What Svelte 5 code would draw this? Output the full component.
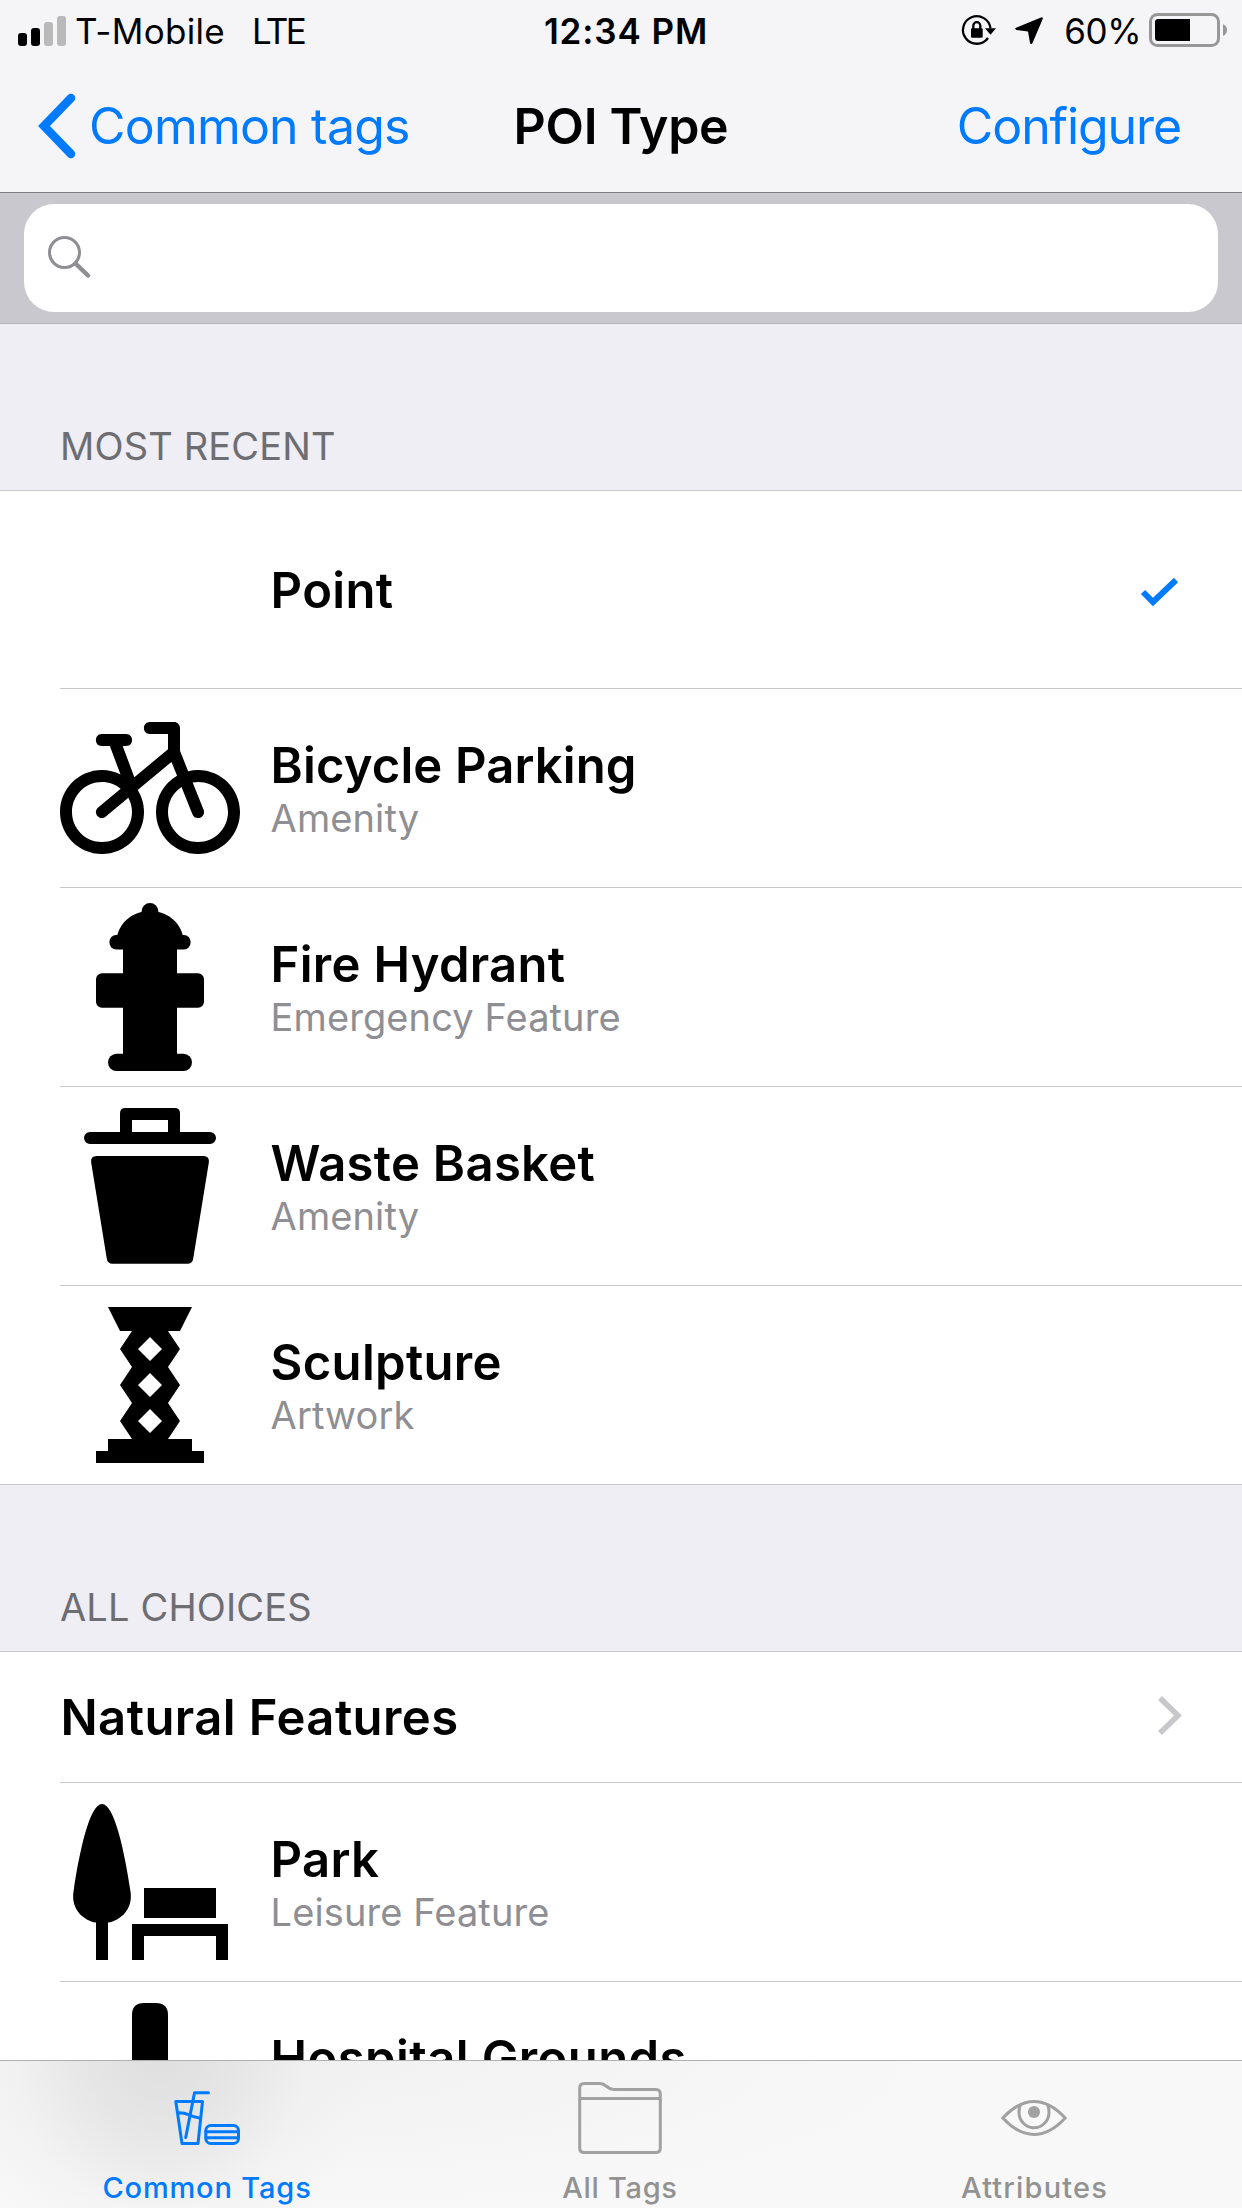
<script>
  const recent = [
    { title: 'Point', icon: null, checked: true },
    { title: 'Bicycle Parking', sub: 'Amenity', icon: 'bicycle' },
    { title: 'Fire Hydrant', sub: 'Emergency Feature', icon: 'hydrant' },
    { title: 'Waste Basket', sub: 'Amenity', icon: 'basket' },
    { title: 'Sculpture', sub: 'Artwork', icon: 'sculpture' }
  ];
  const choices = [
    { title: 'Park', sub: 'Leisure Feature', icon: 'park' },
    { title: 'Hospital Grounds', icon: 'hospital', partial: true }
  ];
</script>

{#snippet glyph(name)}
  <svg class="glyph" viewBox="0 0 15 15">
    {#if name === 'bicycle'}
      <path d="M7.5,2c-0.6761-0.01-0.6761,1.0096,0,1H9v1.2656l-2.8027,2.334L5.2226,4H5.5c0.6761,0.01,0.6761-1.0096,0-1h-2c-0.6761-0.01-0.6761,1.0096,0,1h0.6523L5.043,6.375C4.5752,6.1424,4.0559,6,3.5,6C1.5729,6,0,7.5729,0,9.5S1.5729,13,3.5,13S7,11.4271,7,9.5c0-0.6699-0.2003-1.2911-0.5293-1.8242L9.291,5.3262l0.4629,1.1602C8.7114,7.0937,8,8.2112,8,9.5c0,1.9271,1.5729,3.5,3.5,3.5S15,11.4271,15,9.5S13.4271,6,11.5,6c-0.2831,0-0.5544,0.0434-0.8184,0.1074L10,4.4023V2.5c0-0.2761-0.2239-0.5-0.5-0.5H7.5z M3.5,7c0.5923,0,1.1276,0.2119,1.5547,0.5527l-1.875,1.5625c-0.5109,0.4273,0.1278,1.1945,0.6406,0.7695l1.875-1.5625C5.8835,8.674,6,9.0711,6,9.5C6,10.8866,4.8866,12,3.5,12S1,10.8866,1,9.5S2.1133,7,3.5,7z M11.5,7C12.8866,7,14,8.1134,14,9.5S12.8866,12,11.5,12S9,10.8866,9,9.5c0-0.877,0.4468-1.6421,1.125-2.0898l0.9102,2.2734c0.246,0.6231,1.1804,0.2501,0.9297-0.3711l-0.9082-2.2695C11.2009,7.0193,11.3481,7,11.5,7z" />
    {:else if name === 'hydrant'}
      <circle cx="7.5" cy="1.2" r=".7" />
      <path d="M4.75 3.3C5 2 6.2 1.17 7.5 1.17S10 2 10.25 3.3z" />
      <rect x="4.12" y="3.17" width="6.76" height="1.2" rx=".55" />
      <path d="M5.25 4h4.5v10h-4.5z" />
      <rect x="3" y="6.36" width="9" height="2.86" rx=".5" />
      <rect x="4" y="13.07" width="7" height="1.43" rx=".715" />
    {:else if name === 'basket'}
      <path fill-rule="evenodd" d="M5.45 1h4.1Q10 1 10 1.45V3h2.5a.5.5 0 0 1 0 1h-10a.5.5 0 0 1 0-1H5V1.45Q5 1 5.45 1zM6 2v1h3V2z" />
      <path d="M3.05 5h8.9q.5 0 .46.5l-1.3 8q-.05.48-.5.48H4.39q-.45 0-.5-.48l-1.3-8Q2.55 5 3.05 5z" />
    {:else if name === 'sculpture'}
      <path fill-rule="evenodd" d="M4 1h7l-1 2H9l1 1.5L9 6l1 1.5L9 9l1 1.5L9 12h2v1h1v1H3v-1h1v-1h2l-1-1.5L6 9 5 7.5 6 6 5 4.5 6 3H5zM7.5 3.5l-1 1 1 1 1-1zM7.5 6.5l-1 1 1 1 1-1zM7.5 9.5l-1 1 1 1 1-1z" />
    {:else if name === 'park'}
      <path d="M3.5 1C4.55 1 5.4 5.1 5.86 8.2 6.15 9.8 5 10.7 4 10.88V14H3v-3.12C2 10.7.85 9.8 1.14 8.2 1.6 5.1 2.45 1 3.5 1z" />
      <path d="M7 8h6v2.5H7zM6 11h8v3h-1v-2H7v2H6z" />
    {:else if name === 'hospital'}
      <path d="M7 1h1q1 0 1 1v4h4q1 0 1 1v1q0 1-1 1H9v4q0 1-1 1H7q-1 0-1-1V9H2Q1 9 1 8V7q0-1 1-1h4V2q0-1 1-1z" />
    {/if}
  </svg>
{/snippet}

{#snippet row(item)}
  <li class="row">
    <div class="cell">
      {@render glyph(item.icon)}
      <div class="labels" class:partial={item.partial}>
        <span class="title {item.title.split(' ')[0].toLowerCase()}">{item.title}</span>
        {#if item.sub}<span class="sub">{item.sub}</span>{/if}
      </div>
      {#if item.checked}
        <svg class="check" viewBox="0 0 40 32"><path d="M3 15l10 10L36 3" /></svg>
      {/if}
    </div>
  </li>
{/snippet}

<div class="screen">
  <header>
    <div class="status">
      <div class="left">
        <svg class="signal" viewBox="0 0 50 30">
          <rect x="0" y="17" width="9" height="13" rx="3" />
          <rect x="13" y="12" width="9" height="18" rx="3" />
          <rect class="dim" x="26" y="6" width="9" height="24" rx="3" />
          <rect class="dim" x="39" y="0" width="9" height="30" rx="3" />
        </svg>
        <span class="carrier">T-Mobile</span><span class="lte">LTE</span>
      </div>
      <span class="clock">12:34 PM</span>
      <div class="right">
        <svg class="lock" viewBox="0 0 34 32">
          <path class="ring" d="M28.500 13.500A13.800 13.800 0 1 0 26 23" />
          <path d="M23 13.300h11l-5.500 6.500z" />
          <rect x="9" y="13.300" width="11.700" height="9.500" rx="1.200" />
          <path class="ring" d="M11.300 14v-3.300a3.500 3.500 0 0 1 7 0V14" />
        </svg>
        <svg class="arrow" viewBox="0 0 28 28"><path d="M26 .5Q28.300-.2 27.700 2L17.500 26Q16 28.300 15 26L13 14.500 1.500 13Q-1 12 1 10.800z" /></svg>
        <span class="percent">60%</span>
        <svg class="battery" viewBox="0 0 80 36">
          <rect class="shell" x="1.5" y="1.500" width="68" height="31" rx="7" />
          <path class="level" d="M9 6h32v22H9q-3 0-3-3V9q0-3 3-3z" />
          <path class="nub" d="M74 11q4 2 4 6t-4 6z" />
        </svg>
      </div>
    </div>
    <nav>
      <a class="back" href="#back"><svg viewBox="0 0 40 66"><path d="M33 5L6 33l27 28" /></svg><span>Common tags</span></a>
      <h1>POI Type</h1>
      <a class="configure" href="#configure">Configure</a>
    </nav>
  </header>

  <div class="search">
    <div class="field">
      <svg viewBox="0 0 44 44"><circle cx="17.500" cy="17.500" r="15" /><path d="M28.500 28.500l12.500 12" /></svg>
    </div>
  </div>

  <main>
    <h2>MOST RECENT</h2>
    <ul class="first">{#each recent as item}{@render row(item)}{/each}</ul>
    <h2>ALL CHOICES</h2>
    <ul>
      <li class="row short">
        <div class="cell">
          <span class="title natural">Natural Features</span>
          <svg class="chevron" viewBox="0 0 26 42"><path d="M3 3l18 17.500L3 38" /></svg>
        </div>
      </li>
      {#each choices as item}{@render row(item)}{/each}
    </ul>
  </main>

  <footer>
    <div class="tab active">
      <svg class="food" viewBox="0 0 68 56">
        <path d="M2.800 10.500h26.700L25 52.500H9zM4.500 21.700q6-.4 11 2t11 3.300M12.700 46.500L21.500 1.700H35.500" />
        <rect x="32.800" y="34.500" width="32.700" height="18" rx="5" /><path d="M33 40.700h32M33 46.700h32" />
      </svg>
      <span>Common Tags</span>
    </div>
    <div class="tab">
      <svg class="folder" viewBox="0 0 84 72">
        <path d="M1.700 6q0-4.500 4.500-4.500H22c6.500 0 7 6 13.500 6h42.300q4.500 0 4.500 4.500v54q0 4.500-4.500 4.500H6.200q-4.500 0-4.500-4.500zM2 16.500h80" />
      </svg>
      <span class="t2">All Tags</span>
    </div>
    <div class="tab">
      <svg class="eye" viewBox="0 0 66 36">
        <path d="M1.800 18C12 7 22 1.500 33 1.500S54 7 64.200 18C54 29 44 34.500 33 34.500S12 29 1.800 18z" /><path d="M19.500 4.500Q18 7 18 12.500c0 9 7.500 15.300 15 15.300s15-6.300 15-15.300q0-5.500-1.500-8" /><circle cx="33" cy="12" r="6" />
      </svg>
      <span class="t3">Attributes</span>
    </div>
  </footer>
</div>

<style>
  :global(body) { margin: 0; }
  .screen { width: 1242px; height: 2208px; overflow: hidden; display: flex; flex-direction: column; background: #efeef4; font-family: Inter, "Liberation Sans", sans-serif; color: #000; font-kerning: normal; }
  svg { display: block; flex: none; overflow: visible; }
  header { height: 192px; flex: none; background: #f5f5f7; border-bottom: 1px solid #7d7d7f; }
  .status { height: 60px; display: grid; grid-template-columns: 1fr auto 1fr; align-items: center; font-size: 35px; line-height: 62px; }
  .left, .right { display: flex; align-items: center; }
  .left { padding-left: 18px; }
  .signal { width: 50px; height: 30px; }
  .dim { fill: #b9b9b9; }
  .carrier { margin-left: 7px; letter-spacing: 0.3px; }
  .lte { margin-left: 27px; letter-spacing: -2.600px; }
  .clock { font-weight: 600; letter-spacing: 0.900px; padding-left: 10px; }
  .right { justify-content: flex-end; padding-right: 13px; }
  .lock { width: 34px; height: 32px; }
  .ring { fill: none; stroke: #000; stroke-width: 2.300; }
  .arrow { width: 28px; height: 28px; margin-left: 19px; }
  .percent { margin-left: 21px; letter-spacing: -0.500px; }
  .battery { width: 80px; height: 36px; margin-left: 8px; }
  .shell { fill: none; stroke: #979797; stroke-width: 3; }
  .nub { fill: #979797; }
  nav { height: 132px; display: grid; grid-template-columns: 1fr auto 1fr; align-items: center; font-size: 50px; line-height: 132px; }
  a { color: #007aff; text-decoration: none; }
  .back { display: flex; align-items: center; padding-left: 38px; letter-spacing: -0.800px; }
  .back svg { width: 40px; height: 66px; fill: none; stroke: #007aff; stroke-width: 8.500; stroke-linecap: round; }
  .back span { margin-left: 11px; }
  h1 { margin: 0; font-size: 50px; font-weight: 600; line-height: 132px; letter-spacing: -0.300px; }
  .configure { text-align: right; padding-right: 61px; letter-spacing: -1.100px; }
  .search { height: 130px; flex: none; background: #c9c8ce; border-bottom: 1px solid #b3b2b8; display: flex; padding: 0 24px; align-items: center; }
  .field { flex: 1; height: 108px; border-radius: 30px; background: #fff; display: flex; align-items: center; padding-left: 23px; }
  .field svg { width: 44px; height: 44px; margin-top: -2px; fill: none; stroke: #8e8e93; stroke-width: 3; stroke-linecap: round; }
  .field path { stroke-width: 4.500; }
  main { flex: 1; min-height: 0; overflow: hidden; }
  h2 { margin: 0; height: 166px; box-sizing: border-box; padding: 98px 0 0 60px; font-size: 38px; font-weight: 400; line-height: 48px; letter-spacing: 0.150px; color: #6d6d72; }
  ul { margin: 0; padding: 0; list-style: none; background: #fff; border-top: 1px solid #c8c7cc; }
  .first { border-bottom: 1px solid #c8c7cc; }
  .row { padding-left: 60px; }
  .cell { height: 198px; display: flex; align-items: center; border-bottom: 1px solid #c8c7cc; }
  .first .row:first-child .cell { height: 197px; }
  .first .row:last-child .cell { border-bottom: 0; }
  .row.short .cell { height: 130px; }
  .glyph { width: 180px; height: 180px; }
  .labels { display: flex; flex-direction: column; margin-left: 30.600px; flex: 1; padding-top: 3px; }
  .labels.partial { padding-bottom: 48px; }
  .title { font-size: 49px; font-weight: 600; line-height: 58px; letter-spacing: 0.300px; }
  .title.bicycle { letter-spacing: 0.120px; }
  .title.natural { letter-spacing: 0.420px; padding: 1px 0 0 0.500px; }
  .title.hospital { letter-spacing: 0.400px; }
  .sub { font-size: 38px; line-height: 47px; letter-spacing: 0.100px; color: #8e8e93; }
  .check { width: 40px; height: 32px; fill: none; stroke: #007aff; stroke-width: 6; margin: 6px 62px 0 0; }
  .short .title { flex: 1; }
  .chevron { width: 26px; height: 42px; fill: none; stroke: #c7c7cc; stroke-width: 5.500; margin: 0 59px 2px 0; }
  footer {
    height: 147px; flex: none; display: grid; grid-template-columns: 1fr 1fr 1fr; border-top: 1px solid #b0b0b0;
    background:
      radial-gradient(ellipse 210px 230px at 160px -10px, rgba(220,220,220,.9), rgba(224,224,224,.7) 35%, rgba(236,236,236,.35) 70%, rgba(246,246,246,0)),
      radial-gradient(ellipse 640px 150px at 300px 0, #f1f1f1, rgba(248,248,248,0)),
      #f8f8f8;
  }
  .tab { display: flex; flex-direction: column; align-items: center; color: #929292; font-size: 29px; font-weight: 450; line-height: 36px; letter-spacing: 0.850px; }
  .tab svg { fill: none; stroke: #a1a1a1; stroke-width: 3; }
  .active { color: #007aff; }
  .tab.active svg { stroke: #007aff; }
  .t2 { letter-spacing: 0.700px; margin-right: 2px; }
  .t3 { letter-spacing: 1.150px; margin-right: 1px; }
  .food { width: 68px; height: 56px; margin: 30px 0 23px; stroke-linecap: round; stroke-linejoin: round; }
  .folder { width: 84px; height: 72px; margin: 21px 2px 16px 0; }
  .eye { width: 66px; height: 36px; margin: 39px 2px 34px 0; }
  .eye circle { fill: #a1a1a1; stroke: none; }
</style>
